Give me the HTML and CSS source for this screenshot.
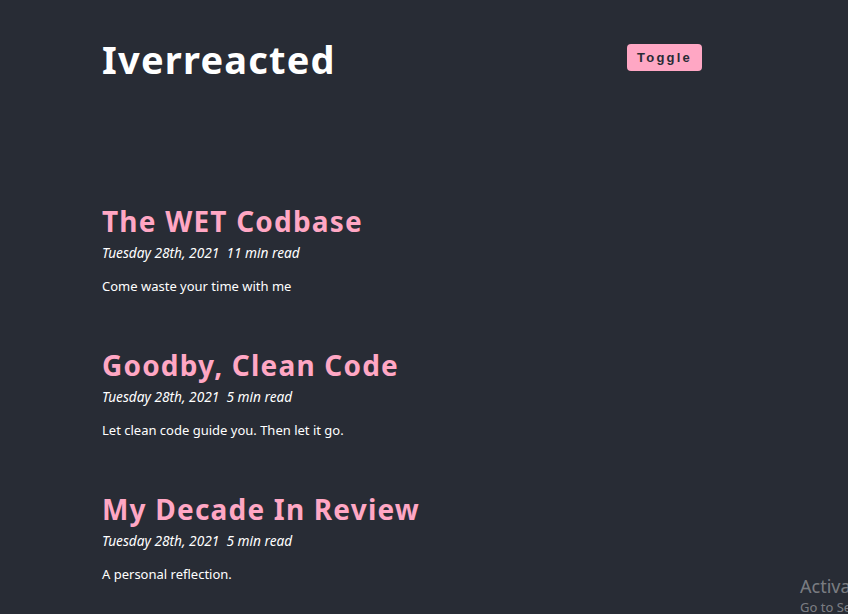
FILE: index.html
```html
<!DOCTYPE html>
<html lang="en">
<head>
<meta charset="utf-8">
<title>Iverreacted</title>
<link rel="stylesheet" href="styles.css">
</head>
<body>
<div class="page">
  <header class="header">
    <h1 class="brand">Iverreacted</h1>
    <button class="toggle">Toggle</button>
  </header>
  <main class="posts">
    <article class="post">
      <h2 class="post-title">The WET Codbase</h2>
      <p class="post-meta">Tuesday 28th, 2021&nbsp; 11 min read</p>
      <p class="post-desc">Come waste your time with me</p>
    </article>
    <article class="post">
      <h2 class="post-title">Goodby, Clean Code</h2>
      <p class="post-meta">Tuesday 28th, 2021&nbsp; 5 min read</p>
      <p class="post-desc">Let clean code guide you. Then let it go.</p>
    </article>
    <article class="post">
      <h2 class="post-title">My Decade In Review</h2>
      <p class="post-meta">Tuesday 28th, 2021&nbsp; 5 min read</p>
      <p class="post-desc">A personal reflection.</p>
    </article>
  </main>
</div>
<div class="watermark">
  <div class="wm-title">Activate Windows</div>
  <div class="wm-sub">Go to Settings to activate Windows.</div>
</div>
</body>
</html>
```
FILE: styles.css
```css
html, body {
  margin: 0;
  padding: 0;
  height: 100%;
  overflow: hidden;
}
body {
  background: #282c35;
  color: #ffffff;
  font-family: "Noto Sans", "Open Sans", sans-serif;
}
.page {
  width: 600px;
  margin-left: 102px;
  padding-top: 34px;
}
.header {
  display: flex;
  justify-content: space-between;
  align-items: flex-start;
}
.brand {
  margin: 0;
  font-size: 38px;
  font-weight: 700;
  line-height: 50px;
  letter-spacing: 1.2px;
  color: #ffffff;
}
.toggle {
  margin-top: 10px;
  width: 75px;
  height: 27px;
  background: #ffa7c4;
  color: #282c35;
  border: none;
  border-radius: 4px;
  font-family: "Liberation Sans", Arial, sans-serif;
  font-size: 13px;
  font-weight: 600;
  letter-spacing: 2.2px;
  padding: 0;
}
.posts {
  margin-top: 118px;
  display: flex;
  flex-direction: column;
  gap: 50px;
}
.post-title {
  margin: 0;
  font-size: 28px;
  line-height: 38px;
  font-weight: 700;
  letter-spacing: 1.2px;
  color: #ffa7c4;
}
.post-meta {
  margin: 3px 0 0;
  font-size: 13.7px;
  line-height: 20px;
  font-style: italic;
}
.post-desc {
  margin: 13px 0 0;
  font-size: 13px;
  line-height: 20px;
}
.watermark {
  position: absolute;
  left: 800px;
  top: 574px;
  color: rgba(255, 255, 255, 0.4);
  white-space: nowrap;
  font-family: "Noto Sans", sans-serif;
}
.wm-title {
  font-size: 18px;
  line-height: 24px;
}
.wm-sub {
  font-size: 13px;
  line-height: 18px;
}
```
